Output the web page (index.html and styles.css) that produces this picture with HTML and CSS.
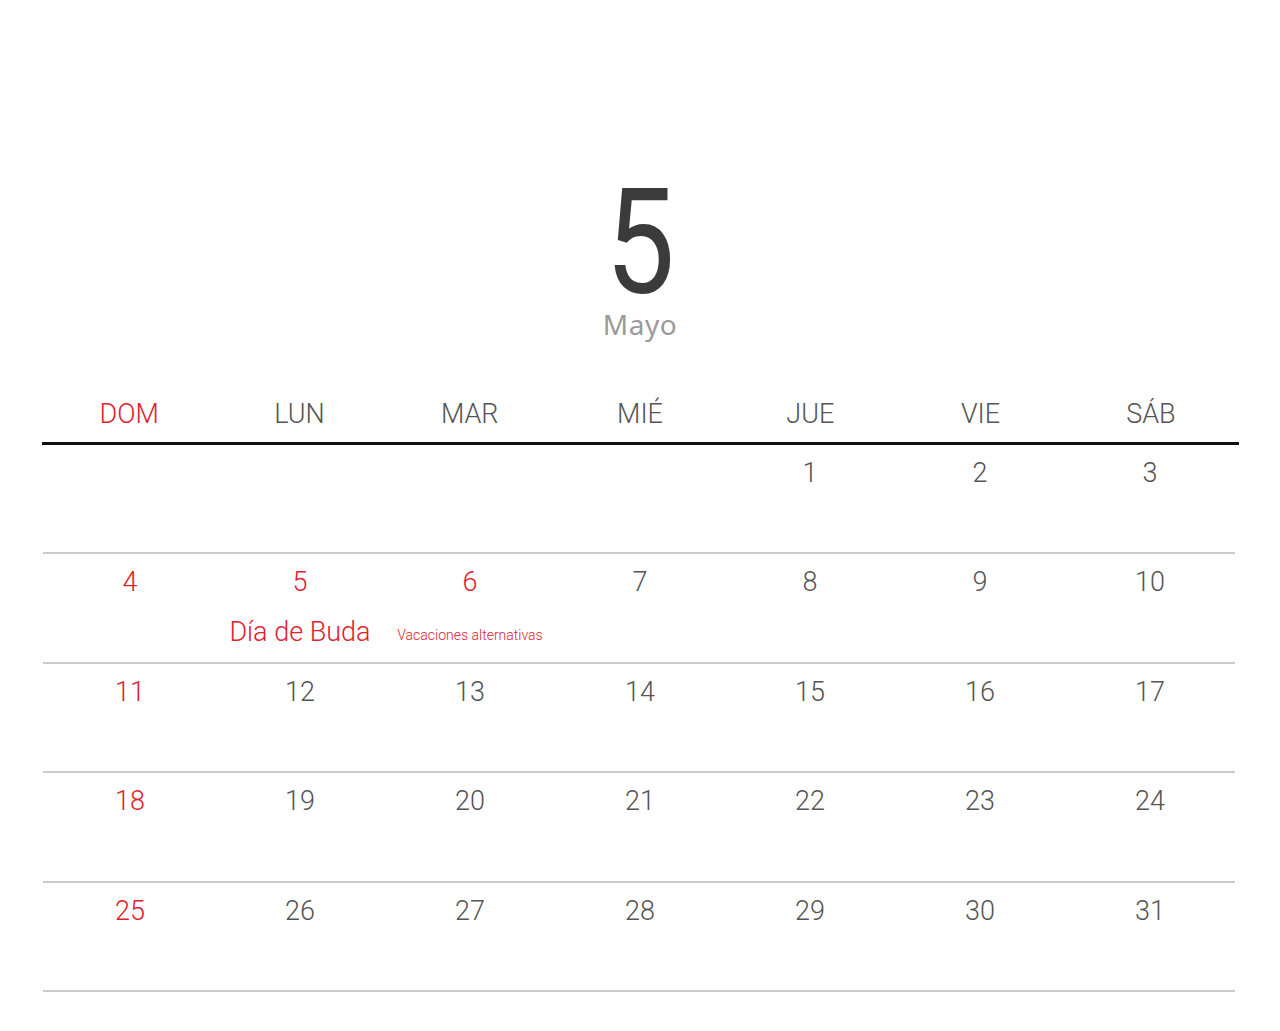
FILE: index.html
```html
<!DOCTYPE html>
<html lang="es">
<head>
<meta charset="utf-8">
<link rel="stylesheet" href="styles.css">
</head>
<body>
<div class="page">
  <header class="title">
    <div class="month-num">5</div>
    <div class="month-name">Mayo</div>
  </header>
  <div class="calendar">
    <div class="weekdays">
      <div class="wd red">DOM</div>
      <div class="wd">LUN</div>
      <div class="wd">MAR</div>
      <div class="wd">MIÉ</div>
      <div class="wd">JUE</div>
      <div class="wd">VIE</div>
      <div class="wd">SÁB</div>
    </div>
    <div class="week">
      <div class="day"></div><div class="day"></div><div class="day"></div><div class="day"></div>
      <div class="day"><span class="n">1</span></div>
      <div class="day"><span class="n">2</span></div>
      <div class="day"><span class="n">3</span></div>
    </div>
    <div class="week">
      <div class="day red"><span class="n">4</span></div>
      <div class="day red"><span class="n">5</span><span class="hol">Día de Buda</span></div>
      <div class="day red"><span class="n">6</span><span class="hol small">Vacaciones alternativas</span></div>
      <div class="day"><span class="n">7</span></div>
      <div class="day"><span class="n">8</span></div>
      <div class="day"><span class="n">9</span></div>
      <div class="day"><span class="n">10</span></div>
    </div>
    <div class="week">
      <div class="day red"><span class="n">11</span></div>
      <div class="day"><span class="n">12</span></div>
      <div class="day"><span class="n">13</span></div>
      <div class="day"><span class="n">14</span></div>
      <div class="day"><span class="n">15</span></div>
      <div class="day"><span class="n">16</span></div>
      <div class="day"><span class="n">17</span></div>
    </div>
    <div class="week">
      <div class="day red"><span class="n">18</span></div>
      <div class="day"><span class="n">19</span></div>
      <div class="day"><span class="n">20</span></div>
      <div class="day"><span class="n">21</span></div>
      <div class="day"><span class="n">22</span></div>
      <div class="day"><span class="n">23</span></div>
      <div class="day"><span class="n">24</span></div>
    </div>
    <div class="week">
      <div class="day red"><span class="n">25</span></div>
      <div class="day"><span class="n">26</span></div>
      <div class="day"><span class="n">27</span></div>
      <div class="day"><span class="n">28</span></div>
      <div class="day"><span class="n">29</span></div>
      <div class="day"><span class="n">30</span></div>
      <div class="day"><span class="n">31</span></div>
    </div>
  </div>
</div>
</body>
</html>
```
FILE: styles.css
```css
html, body {
  margin: 0;
  padding: 0;
  background: #fff;
}
body {
  font-family: Roboto, "Liberation Sans", sans-serif;
  color: #555;
}
.page {
  width: 1280px;
  height: 1031px;
  overflow: hidden;
  padding-top: 179px;
  box-sizing: border-box;
}
.title {
  display: flex;
  flex-direction: column;
  align-items: center;
}
.month-num {
  font-family: Roboto, "Noto Sans", sans-serif;
  font-size: 146px;
  line-height: 130px;
  height: 130px;
  font-weight: 400;
  color: #3b3b3b;
  transform: scaleX(0.85);
}
.month-name {
  font-family: "Noto Sans", "Open Sans", sans-serif;
  font-size: 28px;
  line-height: 30px;
  color: #9a9a9a;
  letter-spacing: 0.5px;
}
.calendar {
  margin: 55px 43px 0 42px;
}
.weekdays {
  display: grid;
  grid-template-columns: repeat(7, 1fr);
  border-bottom: 3px solid #111;
  height: 48px;
  padding: 0 3px 0 2px;
  margin-right: -2px;
}
.wd {
  text-align: center;
  font-size: 27px;
  line-height: 40px;
  font-weight: 300;
  color: #555;
}
.wd.red { color: #e0202e; }
.red { color: #e0202e; }
.week {
  display: grid;
  grid-template-columns: repeat(7, 1fr);
  height: 109.5px;
  box-sizing: border-box;
  border-bottom: 2px solid #cbcbcb;
  padding: 0 0 0 2px;
  margin: 0 2px 0 1px;
}
.weekdays + .week {
  height: 109px;
}
.day {
  display: flex;
  flex-direction: column;
  align-items: center;
  padding-top: 14px;
}
.n {
  font-size: 27px;
  line-height: 28px;
  font-weight: 300;
}
.hol {
  margin-top: 22px;
  font-size: 27px;
  line-height: 28px;
  font-weight: 300;
  color: #e0202e;
}
.hol.small {
  font-size: 14px;
  margin-top: 29px;
  line-height: 20px;
}
```
